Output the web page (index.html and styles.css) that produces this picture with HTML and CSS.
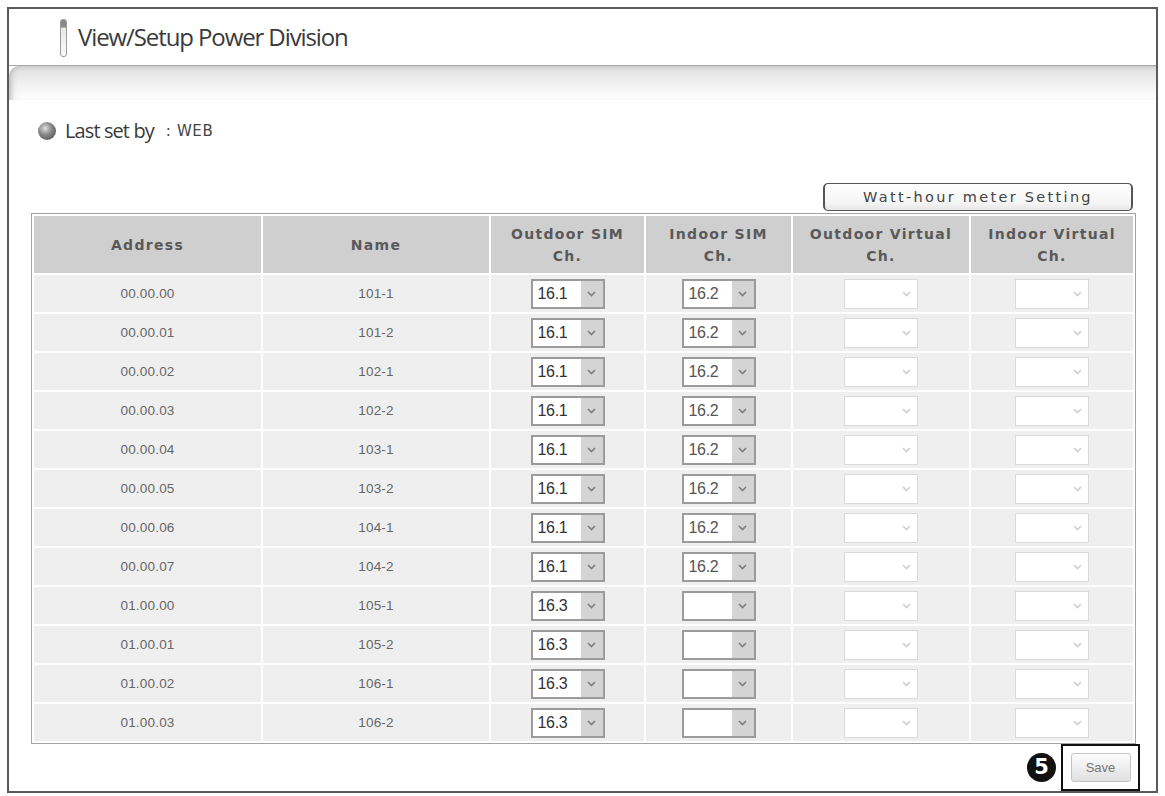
FILE: index.html
```html
<!DOCTYPE html>
<html>
<head>
<meta charset="utf-8">
<link rel="stylesheet" href="styles.css">
</head>
<body>
<div class="frame">
  <div class="header">
    <span class="capsule"></span>
    <span class="title">View/Setup Power Division</span>
  </div>
  <div class="band"></div>
  <div class="content">
    <div class="lastset"><span class="ball"></span><span class="ls-label">Last set by</span><span class="ls-value">: WEB</span></div>
    <div class="toolbar"><button class="watt">Watt-hour meter Setting</button></div>
    <table class="grid">
      <colgroup>
        <col class="c1"><col class="c2"><col class="c3"><col class="c4"><col class="c5"><col class="c6">
      </colgroup>
      <thead>
        <tr>
          <th>Address</th><th>Name</th><th>Outdoor SIM<br>Ch.</th><th>Indoor SIM<br>Ch.</th><th>Outdoor Virtual<br>Ch.</th><th>Indoor Virtual<br>Ch.</th>
        </tr>
      </thead>
      <tbody id="rows"></tbody>
    </table>
    <div class="saverow">
      <span class="num">5</span>
      <div class="savebox"><button class="save">Save</button></div>
    </div>
  </div>
</div>
<script src="app.js"></script>
</body>
</html>
```
FILE: app.js
```js
var data = [
  ["00.00.00","101-1","16.1","16.2"],
  ["00.00.01","101-2","16.1","16.2"],
  ["00.00.02","102-1","16.1","16.2"],
  ["00.00.03","102-2","16.1","16.2"],
  ["00.00.04","103-1","16.1","16.2"],
  ["00.00.05","103-2","16.1","16.2"],
  ["00.00.06","104-1","16.1","16.2"],
  ["00.00.07","104-2","16.1","16.2"],
  ["01.00.00","105-1","16.3",""],
  ["01.00.01","105-2","16.3",""],
  ["01.00.02","106-1","16.3",""],
  ["01.00.03","106-2","16.3",""]
];
var chev = '<svg width="9" height="6" viewBox="0 0 9 6"><polyline points="1,1 4.5,4.5 8,1" fill="none" stroke="currentColor" stroke-width="1.6"/></svg>';
function sel(v, cls) {
  return '<span class="sel ' + cls + '"><span class="sv">' + v + '</span><span class="sa">' + chev + '</span></span>';
}
var html = "";
data.forEach(function (r) {
  html += "<tr><td>" + r[0] + "</td><td>" + r[1] + "</td><td>" + sel(r[2], "on") + "</td><td>" + sel(r[3], "on light") + "</td><td>" + sel("", "off") + "</td><td>" + sel("", "off") + "</td></tr>";
});
document.getElementById("rows").innerHTML = html;
```
FILE: styles.css
```css
* { box-sizing: border-box; }
html, body { margin: 0; padding: 0; background: #fff; }
body { width: 1165px; height: 796px; overflow: hidden; }

.frame {
  margin: 7px 0 0 7px;
  width: 1151px;
  border: 2px solid #5a5a5a;
  display: flex;
  flex-direction: column;
  background: #fff;
}

.header {
  height: 57px;
  border-bottom: 1px solid #a9a9a9;
  display: flex;
  align-items: center;
  padding-left: 51px;
}
.capsule {
  width: 7px;
  height: 38px;
  border: 1px solid #9a9a9a;
  border-radius: 3px;
  background: linear-gradient(to bottom, #8a8a8a 0, #8a8a8a 20%, #e8e8e8 22%, #fafafa 100%);
  margin-top: 2px;
}
.title {
  margin-left: 11px;
  font-family: "Open Sans", "Liberation Sans", sans-serif;
  font-size: 24px;
  letter-spacing: -1.1px;
  color: #3a3a3a;
  margin-top: -2px;
}

.band {
  height: 34px;
  background: linear-gradient(to bottom, #cfcfcf 0, #e4e4e4 15%, #f0f0f0 50%, #ffffff 100%);
  border-top-left-radius: 10px;
  box-shadow: inset 6px 0 6px -4px #b5b5b5;
}

.content {
  padding: 0 20px 0 22px;
  display: flex;
  flex-direction: column;
}

.lastset {
  margin-top: 21px;
  height: 20px;
  display: flex;
  align-items: center;
  padding-left: 7px;
  font-family: "Open Sans", "Liberation Sans", sans-serif;
  color: #3a3a3a;
}
.ball {
  width: 18px;
  height: 18px;
  border-radius: 50%;
  background: radial-gradient(circle at 40% 35%, #e0e0e0 0, #8a8a8a 40%, #454545 100%);
  margin-right: 9px;
}
.ls-label { font-size: 20px; letter-spacing: -0.9px; margin-top: -2px; }
.ls-value {
  margin-left: 12px;
  font-family: "DejaVu Sans", sans-serif;
  font-size: 15px;
  letter-spacing: 0.6px;
  color: #444;
}

.toolbar {
  margin-top: 42px;
  display: flex;
  justify-content: flex-end;
  padding-right: 3px;
}
.watt {
  width: 310px;
  height: 28px;
  border: 1px solid #555;
  border-left-width: 2px;
  border-right-width: 2px;
  border-radius: 5px;
  background: linear-gradient(to bottom, #ffffff 0, #f6f6f6 70%, #e6e6e6 100%);
  font-family: "DejaVu Sans", sans-serif;
  font-size: 14.5px;
  letter-spacing: 2.3px;
  color: #444;
  padding: 0;
}

.grid {
  margin-top: 2px;
  width: 1105px;
  table-layout: fixed;
  border-collapse: separate;
  border-spacing: 2px;
  border: 1px solid #a3a3a3;
  background: #fff;
}
.c1 { width: 227px; }
.c2 { width: 226px; }
.c3 { width: 153px; }
.c4 { width: 145px; }
.c5 { width: 176px; }
.c6 { width: 162px; }

.grid th {
  height: 57px;
  background: #cfcfcf;
  font-family: "DejaVu Sans", sans-serif;
  font-weight: bold;
  font-size: 14px;
  letter-spacing: 1.3px;
  line-height: 22px;
  color: #595959;
  padding: 0;
  text-align: center;
}
.grid td {
  height: 37px;
  background: #efefef;
  text-align: center;
  padding: 0;
  font-family: "Liberation Sans", sans-serif;
  font-size: 13.5px;
  color: #666;
  letter-spacing: 0.2px;
}

.sel {
  display: inline-flex;
  vertical-align: middle;
  width: 74px;
  height: 30px;
  border: 2px solid #9b9b9b;
  background: #fff;
  text-align: left;
}
.sv {
  flex: 1;
  padding-left: 5px;
  line-height: 26px;
  font-family: "Liberation Sans", sans-serif;
  font-size: 16px;
  color: #333;
  letter-spacing: -0.3px;
}
.sel.light .sv { color: #555; }
.sa {
  width: 22px;
  background: #d4d4d4;
  color: #7e7e7e;
  display: flex;
  align-items: center;
  justify-content: center;
}
.sel.off {
  border: 1px solid #dadada;
}
.sel.off .sa {
  background: #fff;
  color: #cfcfcf;
}

.saverow {
  height: 47px;
  display: flex;
  justify-content: flex-end;
  align-items: center;
  margin-right: -4px;
}
.num {
  width: 29px;
  height: 29px;
  border-radius: 50%;
  background: #111;
  color: #fff;
  font-family: "DejaVu Sans", sans-serif;
  font-weight: bold;
  font-size: 21px;
  line-height: 29px;
  text-align: center;
  margin-right: 5px;
}
.savebox {
  width: 79px;
  height: 47px;
  border: 2px solid #111;
  display: flex;
  align-items: center;
  justify-content: center;
}
.save {
  width: 60px;
  height: 29px;
  border: 1px solid #c4c4c4;
  border-radius: 3px;
  background: linear-gradient(to bottom, #fdfdfd 0, #eeeeee 50%, #e0e0e0 100%);
  font-family: "Liberation Sans", sans-serif;
  font-size: 13px;
  color: #777;
  padding: 0;
}
```
